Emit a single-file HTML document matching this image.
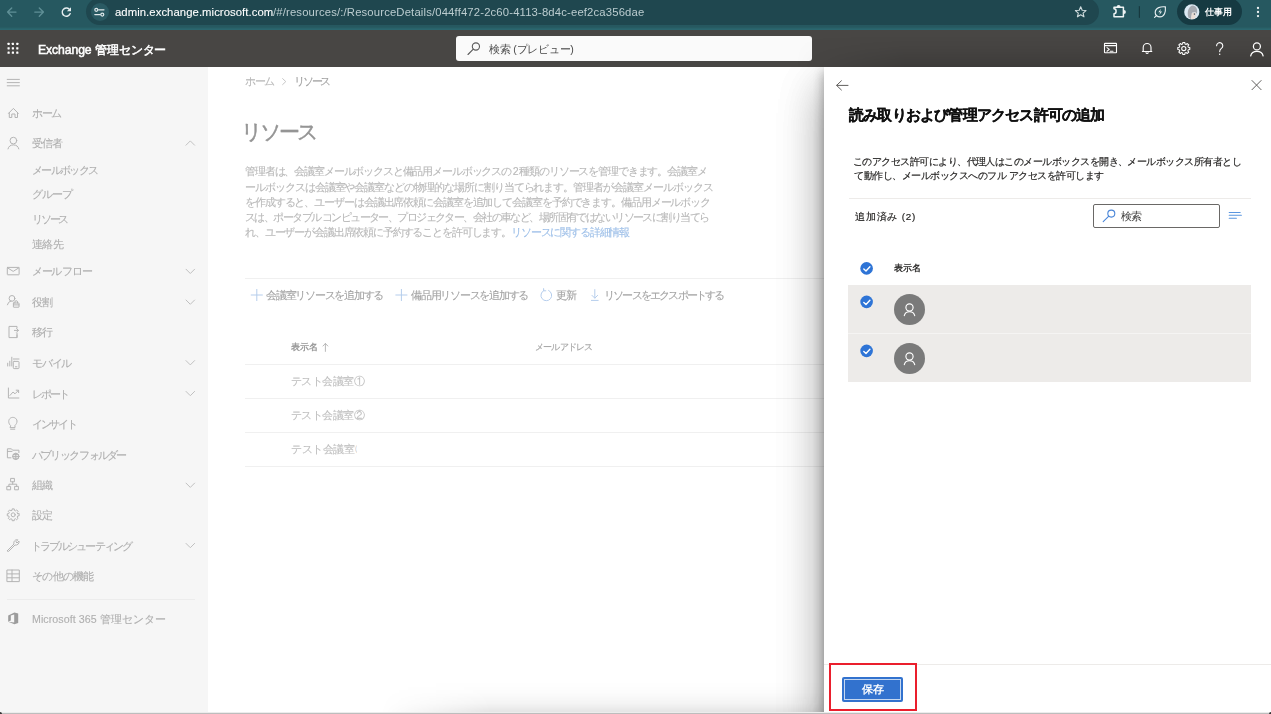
<!DOCTYPE html>
<html lang="ja">
<head>
<meta charset="utf-8">
<title>Exchange 管理センター</title>
<style>
*{box-sizing:border-box;margin:0;padding:0}
html,body{width:1271px;height:714px;overflow:hidden;background:#fff;font-family:"Liberation Sans",sans-serif;}
body{position:relative}
.a{position:absolute}
.t{position:absolute;white-space:nowrap;line-height:1;will-change:transform}
svg{position:absolute;overflow:visible;fill:none}
/* browser chrome */
#chrome{left:0;top:0;width:1271px;height:27px;background:#265860}
#band{left:0;top:27px;width:1271px;height:3px;background:linear-gradient(#26595f 0%,#29626a 50%,#2c6870 100%)}
#url{left:86px;top:-2px;width:1013px;height:27px;border-radius:14px;background:#1f474f}
#tune{left:90.5px;top:3px;width:18px;height:18px;border-radius:9px;background:#2a5a63}
#prof{left:1177px;top:-2px;width:65px;height:27px;border-radius:14px;background:#163a42}
/* app header */
#hdr{left:0;top:30px;width:1271px;height:37px;background:#484644}
#hsearch{left:456px;top:36px;width:356px;height:25px;border-radius:3px;background:#fafafa}
/* sidebar */
#side{left:0;top:67px;width:208px;height:647px;background:#f6f6f6}
.nav{color:#afafaf;font-size:10.64px;left:31.7px;-webkit-text-stroke:.12px}
/* main */
.m{color:#b9b9b9;font-size:10.64px;-webkit-text-stroke:.12px}
.hl{background:#f0f0f0;height:1px}
/* panel */
#shadow{left:773px;top:67px;width:498px;height:647px;overflow:hidden}
#shadow i{position:absolute;left:51px;top:0;width:447px;height:660px;box-shadow:0 19.5px 43.8px rgba(0,0,0,.22),0 3.6px 11px rgba(0,0,0,.18)}
#panel{left:824px;top:67px;width:447px;height:647px;background:#fff}
.p{color:#201f1e;font-size:9.9px;-webkit-text-stroke:.18px #201f1e}
.row{left:848px;width:403px;background:#edebe9}
.av{width:31px;height:31px;border-radius:16px;background:#7a7a7a}
#btm{left:0;top:712px;width:1271px;height:2px;background:linear-gradient(#ececec 0,#ececec 50%,#bdbdbd 50%,#bdbdbd 100%)}
.cnr{top:712px;width:4px;height:4px;background:#333;border-radius:2px}
</style>
</head>
<body>
<!-- ===== browser chrome ===== -->
<div id="chrome" class="a"></div>
<div id="band" class="a"></div>
<div id="url" class="a"></div>
<div id="tune" class="a"></div>
<div id="prof" class="a"></div>
<div class="t" style="letter-spacing:0.070px;--w:158.3px;left:114.9px;top:6.5px;font-size:11.3px;color:#fff;-webkit-text-stroke:.1px #fff">admin.exchange.microsoft.com</div>
<div class="t" style="letter-spacing:0.150px;--w:371.4px;left:273.2px;top:6.5px;font-size:11.3px;color:#bccdd0">/#/resources/:/ResourceDetails/044ff472-2c60-4113-8d4c-eef2ca356dae</div>
<div class="t" style="letter-spacing:-0.100px;--w:26.7px;left:1204.5px;top:8px;font-size:9.1px;color:#fff;font-weight:bold">仕事用</div>

<!-- ===== app header ===== -->
<div id="hdr" class="a"></div>
<div class="t" style="letter-spacing:-0.080px;--w:128.4px;left:37.8px;top:43.6px;font-size:12.2px;color:#fff;-webkit-text-stroke:.5px #fff">Exchange 管理センター</div>
<div id="hsearch" class="a"></div>
<div class="a" style="left:796px;top:36px;width:475px;height:31px;background:linear-gradient(to bottom,rgba(0,0,0,0) 0%,rgba(0,0,0,.03) 35%,rgba(0,0,0,.09) 70%,rgba(0,0,0,.15) 100%);-webkit-mask-image:linear-gradient(to right,rgba(0,0,0,0) 0,#000 110px);mask-image:linear-gradient(to right,rgba(0,0,0,0) 0,#000 110px)"></div>
<div class="t" style="letter-spacing:-0.243px;--w:84.6px;left:488.8px;top:44.4px;font-size:10.64px;color:#4a4a4a">検索 (プレビュー)</div>

<!-- ===== sidebar ===== -->
<div id="side" class="a"></div>
<div class="t nav" style="letter-spacing:-1.300px;--w:29.1px;top:107.7px">ホーム</div>
<div class="t nav" style="letter-spacing:-0.833px;--w:30.5px;top:138.2px">受信者</div>
<div class="t nav" style="letter-spacing:-1.629px;--w:65.6px;top:165.3px">メールボックス</div>
<div class="t nav" style="letter-spacing:-1.050px;--w:39.8px;top:189.4px">グループ</div>
<div class="t nav" style="letter-spacing:-2.250px;--w:35px;top:214.2px">リソース</div>
<div class="t nav" style="letter-spacing:-0.667px;--w:31px;top:238.6px">連絡先</div>
<div class="t nav" style="letter-spacing:-1.365px;--w:59.4px;top:266.3px">メール フロー</div>
<div class="t nav" style="letter-spacing:-0.750px;--w:20.5px;top:297.1px">役割</div>
<div class="t nav" style="letter-spacing:-0.750px;--w:20.5px;top:327.4px">移行</div>
<div class="t nav" style="letter-spacing:-1.250px;--w:39px;top:357.7px">モバイル</div>
<div class="t nav" style="letter-spacing:-2.100px;--w:35.6px;top:388.5px">レポート</div>
<div class="t nav" style="letter-spacing:-2.320px;--w:43.4px;top:419px">インサイト</div>
<div class="t nav" style="letter-spacing:-1.759px;--w:93.6px;top:449.7px">パブリック フォルダー</div>
<div class="t nav" style="letter-spacing:-0.750px;--w:20.5px;top:480.2px">組織</div>
<div class="t nav" style="letter-spacing:-0.750px;--w:20.5px;top:509.7px">設定</div>
<div class="t nav" style="letter-spacing:-1.927px;--w:99.8px;top:540.5px;left:30.8px">トラブルシューティング</div>
<div class="t nav" style="letter-spacing:-0.733px;--w:61.6px;top:571px">その他の機能</div>
<div class="a hl" style="left:7px;top:599px;width:188px;background:#ececec"></div>
<div class="t nav" style="letter-spacing:0.073px;--w:134.2px;top:613.9px">Microsoft 365 管理センター</div>

<!-- ===== main content (dimmed) ===== -->
<div class="t m" style="letter-spacing:-1.300px;--w:29.1px;left:245px;top:75.5px">ホーム</div>
<div class="t m" style="letter-spacing:-2.175px;--w:35.3px;left:294.2px;top:75.5px;color:#a2a2a2">リソース</div>
<div class="t" style="letter-spacing:-3.000px;--w:75px;left:240.6px;top:121.5px;font-size:21.3px;color:#959595;-webkit-text-stroke:.45px #959595">リソース</div>
<div class="t m" style="letter-spacing:-1.148px;--w:461.6px;left:245px;top:166.1px">管理者は、会議室メールボックスと備品用メールボックスの 2 種類のリソースを管理できます。会議室メ</div>
<div class="t m" style="letter-spacing:-1.053px;--w:467.5px;left:245px;top:181.5px">ールボックスは会議室や会議室などの物理的な場所に割り当てられます。管理者が会議室メールボックス</div>
<div class="t m" style="letter-spacing:-1.106px;--w:465px;left:245px;top:196.7px">を作成すると、ユーザーは会議出席依頼に会議室を追加して会議室を予約できます。備品用メールボック</div>
<div class="t m" style="letter-spacing:-1.569px;--w:463.5px;left:245px;top:211.9px">スは、ポータブル コンピューター、プロジェクター、会社の車など、場所固有ではないリソースに割り当てら</div>
<div class="t m" style="letter-spacing:-1.149px;--w:384.2px;left:245px;top:227.2px">れ、ユーザーが会議出席依頼に予約することを許可します。<span style="color:#9dbfe8">リソースに関する詳細情報</span></div>
<div class="a hl" style="left:245px;top:277.5px;width:579px"></div>
<div class="t m" style="letter-spacing:-1.250px;--w:117px;left:266.4px;top:290px;color:#a4a4a4">会議室リソースを追加する</div>
<div class="t m" style="letter-spacing:-1.250px;--w:117px;left:411.1px;top:290px;color:#a4a4a4">備品用リソースを追加する</div>
<div class="t m" style="letter-spacing:-0.750px;--w:20.5px;left:556.1px;top:290px;color:#a4a4a4">更新</div>
<div class="t m" style="letter-spacing:-1.800px;--w:119.6px;left:604.3px;top:290px;color:#a4a4a4">リソースをエクスポートする</div>
<div class="t m" style="letter-spacing:-0.100px;--w:26.7px;left:290.7px;top:343.2px;font-size:9.12px;color:#949494;-webkit-text-stroke:.3px #949494">表示名</div>
<div class="t m" style="letter-spacing:-1.104px;--w:56.7px;left:534.6px;top:343.2px;font-size:9.12px;color:#a4a4a4">メール アドレス</div>
<div class="a hl" style="left:245px;top:364px;width:579px"></div>
<div class="t m" style="letter-spacing:-0.514px;--w:73.4px;left:291.2px;top:375.9px;color:#c0c0c0">テスト会議室①</div>
<div class="a hl" style="left:245px;top:398px;width:579px"></div>
<div class="t m" style="letter-spacing:-0.514px;--w:73.4px;left:291.2px;top:409.9px;color:#c0c0c0">テスト会議室②</div>
<div class="a hl" style="left:245px;top:432px;width:579px"></div>
<div class="t m" style="letter-spacing:-0.500px;--w:63px;left:291.2px;top:443.9px;color:#c0c0c0">テスト会議室</div>
<div class="a" style="left:355.2px;top:443.9px;width:2.2px;height:12px;overflow:hidden;color:#c8c8c8;font-size:10.64px;line-height:1">③</div>
<div class="a hl" style="left:245px;top:466px;width:579px"></div>

<div class="a" style="left:381px;top:681px;width:443px;height:32px;background:linear-gradient(to bottom,rgba(0,0,0,0) 0%,rgba(0,0,0,.012) 35%,rgba(0,0,0,.045) 70%,rgba(0,0,0,.11) 100%);-webkit-mask-image:linear-gradient(to right,rgba(0,0,0,0) 0,#000 110px);mask-image:linear-gradient(to right,rgba(0,0,0,0) 0,#000 110px)"></div>
<!-- ===== side panel ===== -->
<div id="shadow" class="a"><i></i><i></i></div>
<div id="panel" class="a"></div>
<div class="t" style="letter-spacing:-0.800px;--w:255.6px;left:848.9px;top:106.6px;font-size:15.2px;color:#111;font-weight:bold;-webkit-text-stroke:.25px #111">読み取りおよび管理アクセス許可の追加</div>
<div class="t p" style="letter-spacing:-0.537px;--w:388px;left:852.9px;top:156.6px">このアクセス許可により、代理人はこのメールボックスを開き、メールボックス所有者とし</div>
<div class="t p" style="letter-spacing:-0.472px;--w:250px;left:853.8px;top:170.7px">て動作し、メールボックスへのフル アクセスを許可します</div>
<div class="a hl" style="left:849px;top:198px;width:402px;background:#edebe9"></div>
<div class="t p" style="letter-spacing:0.786px;--w:61.1px;left:854.7px;top:212.2px">追加済み (2)</div>
<div class="a" style="left:1093px;top:203.5px;width:127px;height:24.5px;border:1px solid #6a6866;border-radius:2px;background:#fff"></div>
<div class="t p" style="letter-spacing:-0.550px;--w:20.9px;left:1120.8px;top:211.3px;font-size:10.64px;-webkit-text-stroke:0;color:#3a3938">検索</div>
<div class="t p" style="letter-spacing:0.233px;--w:27.7px;left:893.8px;top:264.3px;font-size:9.12px;-webkit-text-stroke:.3px #201f1e">表示名</div>
<div class="a row" style="top:285px;height:97px"></div>
<div class="a" style="left:848px;top:333px;width:403px;height:1px;background:#f5f4f3"></div>
<div class="a av" style="left:894px;top:294px"></div>
<div class="a av" style="left:894px;top:343px"></div>
<div class="a hl" style="left:824px;top:664px;width:447px;background:#edebe9"></div>
<div class="a" style="left:842px;top:677px;width:61px;height:25px;border-radius:2px;background:#3272ce"></div>
<div class="a" style="left:844px;top:679px;width:57px;height:21px;border:1px solid rgba(255,255,255,.72)"></div>
<div class="t" style="letter-spacing:-0.350px;--w:21.3px;left:862.3px;top:684.2px;font-size:10.64px;color:#fff;font-weight:bold">保存</div>
<div class="a" style="left:829px;top:663px;width:88px;height:48px;border:2px solid #ea1f2d"></div>
<svg id="icons" width="1271" height="714" viewBox="0 0 1271 714" style="left:0;top:0;pointer-events:none" stroke-linecap="round" stroke-linejoin="round">
<g stroke="#5f8f96" stroke-width="1.4"><path d="M16,12.1H7.8M11.7,8L7.6,12.1L11.7,16.2"/><path d="M34.8,12.1H43.2M39.3,8L43.4,12.1L39.3,16.2"/></g>
<path d="M70.2,13.6A4.1,4.1 0 1 1 69.3,9.3" stroke="#e6eef0" stroke-width="1.4"/><path d="M71,7.2V11.3H66.9Z" fill="#e6eef0" stroke="none"/>
<g stroke="#dfe8ea" stroke-width="1.2"><circle cx="96.3" cy="9.8" r="1.5"/><path d="M98.6,9.8H104"/><circle cx="102.3" cy="14.6" r="1.5"/><path d="M94.8,14.6H100.2"/></g>
<path d="M1080.70,6.70 L1082.17,10.28 L1086.03,10.57 L1083.08,13.07 L1083.99,16.83 L1080.70,14.80 L1077.41,16.83 L1078.32,13.07 L1075.37,10.57 L1079.23,10.28Z" stroke="#d0dcde" stroke-width="1.1"/>
<path d="M1114,7.3H1123.4V16.7H1114V13.7A2.1,2.5 0 0 0 1114,8.7Z" stroke="#eef3f4" stroke-width="1.5" stroke-linejoin="round"/><path d="M1116.6,6.9A2,2 0 0 1 1120.6,6.9ZM1123.9,9.9A2,2 0 0 1 1123.9,13.9Z" fill="#eef3f4" stroke="none"/>
<path d="M1139.4,6.5V17.3" stroke="#17393f" stroke-width="1.2"/>
<path d="M1165.4,6.9C1161,6.3 1155.3,7.6 1155.2,12.4C1155.1,15.3 1157.5,16.8 1160,16.8C1164.5,16.8 1165.8,12 1165.4,6.9ZM1156.7,15.3L1154.6,17.3" stroke="#e6eef0" stroke-width="1.15"/><path d="M1161,8.7L1158.3,12.3H1160.2L1159.3,15.1L1162.1,11.4H1160.1Z" fill="#e6eef0" stroke="none"/>
<circle cx="1191.8" cy="11.9" r="7.6" fill="#dce9f3" stroke="none"/><path d="M1188.4,17.4C1186.6,12 1188.8,5.8 1193,5.6C1196.6,6.2 1198,10.4 1196.8,13.8L1195.4,12.2L1192.2,12.6L1191,19Z" fill="#a6aab1" stroke="none"/><path d="M1191.8,12.9L1195.6,12.6L1196,15.6L1194.2,18.9L1191,19Z" fill="#eaddd5" stroke="none"/><circle cx="1194.4" cy="14.1" r=".8" fill="#55606b" stroke="none"/>
<g fill="#eef3f4" stroke="none"><circle cx="1258" cy="8" r="1.15"/><circle cx="1258" cy="12" r="1.15"/><circle cx="1258" cy="16.1" r="1.15"/></g>
<g fill="#fff" stroke="none"><rect x="7.5" y="42.8" width="2.2" height="2.2" rx=".4"/><rect x="11.8" y="42.8" width="2.2" height="2.2" rx=".4"/><rect x="16.2" y="42.8" width="2.2" height="2.2" rx=".4"/><rect x="7.5" y="47.2" width="2.2" height="2.2" rx=".4"/><rect x="11.8" y="47.2" width="2.2" height="2.2" rx=".4"/><rect x="16.2" y="47.2" width="2.2" height="2.2" rx=".4"/><rect x="7.5" y="51.6" width="2.2" height="2.2" rx=".4"/><rect x="11.8" y="51.6" width="2.2" height="2.2" rx=".4"/><rect x="16.2" y="51.6" width="2.2" height="2.2" rx=".4"/></g>
<g stroke="#5a5a5a" stroke-width="1.1"><circle cx="475.9" cy="46.5" r="3.6"/><path d="M473.3,49.1L468,54.5"/></g>
<g stroke="#fff" stroke-width="1.1"><rect x="1104.5" y="43.4" width="12" height="9.3" rx=".5"/><path d="M1104.5,45.6H1116.5M1107,47.6L1109.3,49.4L1107,51.2M1110.2,51.3H1113"/></g>
<path d="M1143.2,51.4V47.4A3.9,3.9 0 0 1 1151,47.4V51.4M1142.4,51.5H1151.8M1146,52.8A1.2,1.2 0 0 0 1148.2,52.8" stroke="#fff" stroke-width="1.1"/>
<path d="M1189.81,47.45 L1189.81,49.55 L1188.35,49.67 L1187.85,50.89 L1188.79,52.01 L1187.31,53.49 L1186.19,52.55 L1184.97,53.05 L1184.85,54.51 L1182.75,54.51 L1182.63,53.05 L1181.41,52.55 L1180.29,53.49 L1178.81,52.01 L1179.75,50.89 L1179.25,49.67 L1177.79,49.55 L1177.79,47.45 L1179.25,47.33 L1179.75,46.11 L1178.81,44.99 L1180.29,43.51 L1181.41,44.45 L1182.63,43.95 L1182.75,42.49 L1184.85,42.49 L1184.97,43.95 L1186.19,44.45 L1187.31,43.51 L1188.79,44.99 L1187.85,46.11 L1188.35,47.33Z" stroke="#fff" stroke-width="1.05"/><circle cx="1183.8" cy="48.5" r="2.1" stroke="#fff" stroke-width="1.05"/>
<path d="M1216.6,45.8A3.1,3.1 0 1 1 1221.4,48.4C1220,49.4 1219.7,50 1219.7,51.6" stroke="#fff" stroke-width="1.1"/><circle cx="1219.7" cy="54.3" r=".75" fill="#fff" stroke="none"/>
<g stroke="#fff" stroke-width="1.25"><circle cx="1256.9" cy="46.4" r="3.5"/><path d="M1250.7,55.9A6.3,5.6 0 0 1 1263.1,55.9"/></g>
<g stroke="#b4b4b4" stroke-width="1">
<path d="M7.2,79.4H19.4M7.2,82.6H19.4M7.2,85.8H19.4"/>
<path d="M8.5,113.4L13.4,108.4L18.3,113.4M9.3,112.6V117.5H11.8V114H15V117.5H17.5V112.6"/>
<circle cx="13.4" cy="140.6" r="3.35"/><path d="M8,148.9A5.5,4.9 0 0 1 18.8,148.9"/>
<rect x="7.3" y="267.4" width="11.8" height="7.4" rx=".4"/><path d="M7.5,267.8L13.2,271.4L18.9,267.8"/>
<circle cx="12" cy="298.4" r="2.9"/><path d="M7.4,304.8A5,5 0 0 1 11,300.9"/><rect x="13.4" y="303" width="5.6" height="4.2" rx=".3"/><path d="M14.9,303V302A1.3,1.3 0 0 1 17.5,302V303M13.4,304.9H19"/>
<path d="M17,335V337.6H9V326.4H17V328"/><path d="M14.4,330.4H18.4M16.6,328.6L18.4,330.4L16.6,332.2M17,333V337.4"/>
<path d="M7.7,363.2V366M9.8,361.2V366M11.8,357.2V366M13.3,359H19"/><rect x="13.3" y="361.4" width="5.7" height="7.2" rx=".8"/><path d="M15.4,366.8H16.9"/>
<path d="M8.4,388V398H18.9M10,395.4L13,392L15,393.8L18.4,390.4M16.2,390.2H18.6V392.6"/>
<path d="M10.4,425.4C8.2,423.6 8,419.6 10.6,418C13.2,416.4 16.8,418 17,421C17.1,423 16,424.4 15,425.4V427.6H10.4ZM10.6,429.2H14.8"/>
<path d="M11,457.8H7.4V448.8H11.4L12.6,450.2H18.9V452.6M7.4,451.4H12"/><circle cx="15.8" cy="456.4" r="3.2"/><path d="M12.6,456.4H19M15.8,453.2V459.6M13.4,454.6H18.2M13.4,458.2H18.2"/>
<rect x="11" y="478.4" width="3.4" height="3.4"/><rect x="7.2" y="486.4" width="3.4" height="3.4"/><rect x="15" y="486.4" width="3.4" height="3.4"/><path d="M12.7,481.8V484.2M8.9,486.4V484.2H16.7V486.4"/>
<path d="M19.11,513.77 L19.11,515.83 L17.66,515.94 L17.16,517.14 L18.11,518.25 L16.65,519.71 L15.54,518.76 L14.34,519.26 L14.23,520.71 L12.17,520.71 L12.06,519.26 L10.86,518.76 L9.75,519.71 L8.29,518.25 L9.24,517.14 L8.74,515.94 L7.29,515.83 L7.29,513.77 L8.74,513.66 L9.24,512.46 L8.29,511.35 L9.75,509.89 L10.86,510.84 L12.06,510.34 L12.17,508.89 L14.23,508.89 L14.34,510.34 L15.54,510.84 L16.65,509.89 L18.11,511.35 L17.16,512.46 L17.66,513.66Z"/><circle cx="13.2" cy="514.8" r="2"/>
<path d="M7.4,550.6L14,544C13.2,541.6 15.2,539.2 17.8,539.8L15.8,541.8L17,543L19,541C19.6,543.6 17.4,545.6 15,545L8.6,551.4C8,552 6.8,551.2 7.4,550.6Z"/>
<rect x="7.3" y="570" width="12" height="11.6"/><path d="M12,570V581.6M7.3,573.9H19.3M7.3,577.8H19.3"/>
<g stroke-width="1"><path d="M190.3,142.6"/></g>
<path d="M186,145.2L190.3,140.9L194.6,145.2" stroke="#c0c0c0"/>
<path d="M186,269.2L190.3,273.5L194.6,269.2" stroke="#c0c0c0"/>
<path d="M186,300.0L190.3,304.3L194.6,300.0" stroke="#c0c0c0"/>
<path d="M186,360.6L190.3,364.9L194.6,360.6" stroke="#c0c0c0"/>
<path d="M186,391.4L190.3,395.7L194.6,391.4" stroke="#c0c0c0"/>
<path d="M186,483.1L190.3,487.4L194.6,483.1" stroke="#c0c0c0"/>
<path d="M186,543.4L190.3,547.7L194.6,543.4" stroke="#c0c0c0"/>
</g>
<path d="M8.2,615.4L14.4,612.6L18.2,613.6V623L14.4,624.2L8.2,621.8L14.2,622.6V614.6L10.8,615.6V620.4L8.2,621.8Z" fill="#9c9c9c" stroke="none"/>
<path d="M282.6,78.6L285.8,81.6L282.6,84.6" stroke="#c6c6c6" stroke-width="1"/>
<g stroke="#b5cdec" stroke-width="1"><path d="M251.2,295H262.4M256.8,289.4V300.6"/><path d="M395.8,295H407M401.4,289.4V300.6"/><path d="M548.6,290.4A5.4,5.4 0 1 1 544,290.4M543.6,288.6V290.8H545.8"/><path d="M594.8,289.6V298M592,295.4L594.8,298.2L597.6,295.4M591.4,300.4H598.2"/></g>
<path d="M325.4,351.4V343.6M323,346L325.4,343.5L327.8,346" stroke="#b0b0b0" stroke-width=".9"/>
<path d="M848,85.4H836.8M841.4,80.8L836.6,85.4L841.4,90" stroke="#605e5c" stroke-width="1"/>
<path d="M1252,80.5L1261.1,89.7M1261.1,80.5L1252,89.7" stroke="#605e5c" stroke-width="1"/>
<g stroke="#4a86d8" stroke-width="1.1"><circle cx="1111.3" cy="213.6" r="3.5"/><path d="M1108.8,216.1L1103.2,221.7"/></g>
<path d="M1229.2,212.4H1240.2M1229.2,215.3H1241.4M1229.2,218.3H1236.4" stroke="#5a96e0" stroke-width="1.05"/>
<circle cx="866.6" cy="268.4" r="6.3" fill="#2e74d6" stroke="none"/><path d="M863.8,268.9L866,271.0L869.9,266.8" stroke="#fff" stroke-width="1.4"/>
<circle cx="866.6" cy="301.9" r="6.3" fill="#2e74d6" stroke="none"/><path d="M863.8,302.4L866,304.5L869.9,300.3" stroke="#fff" stroke-width="1.4"/>
<circle cx="866.6" cy="350.9" r="6.3" fill="#2e74d6" stroke="none"/><path d="M863.8,351.4L866,353.5L869.9,349.3" stroke="#fff" stroke-width="1.4"/>
<g stroke="#fff" stroke-width="1.15"><circle cx="909.5" cy="307.5" r="3.6"/><path d="M904.3,315.6A5.3,4.8 0 0 1 914.7,315.6"/></g>
<g stroke="#fff" stroke-width="1.15"><circle cx="909.5" cy="356.5" r="3.6"/><path d="M904.3,364.6A5.3,4.8 0 0 1 914.7,364.6"/></g>
</svg>
<div id="btm" class="a"></div>
<div class="a cnr" style="left:-2px"></div><div class="a cnr" style="left:1269px"></div>
<script id="fit">
(function(){var e=document.querySelectorAll('.t');for(var i=0;i<e.length;i++){var s=e[i],w=parseFloat(s.style.getPropertyValue('--w'));if(!w)continue;var n=Array.from(s.textContent).length,c=parseFloat(getComputedStyle(s).letterSpacing)||0,d=(w-s.getBoundingClientRect().width)/n;if(Math.abs(d)>.02)s.style.letterSpacing=(c+d)+'px';}})();
</script>
</body>
</html>
